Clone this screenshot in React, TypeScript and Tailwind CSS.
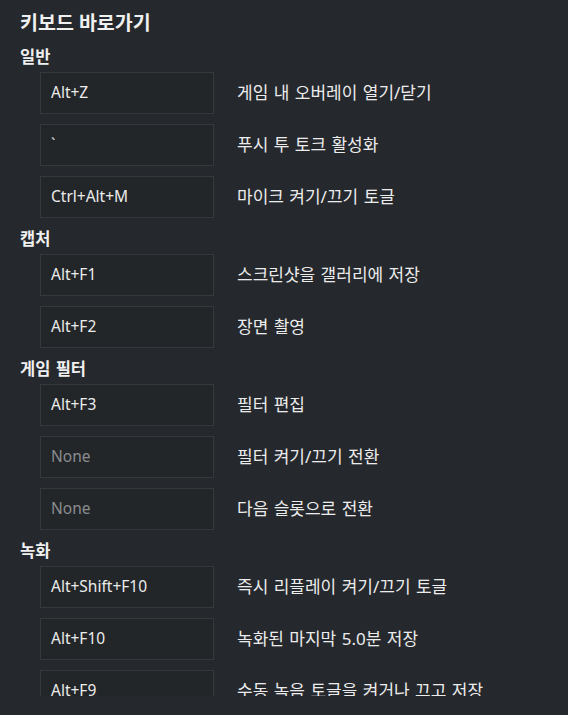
import React from "react";

type Row = { key: string; label: string; none?: boolean };
type Section = { title: string; rows: Row[] };

const sections: Section[] = [
  {
    title: "일반",
    rows: [
      { key: "Alt+Z", label: "게임 내 오버레이 열기/닫기" },
      { key: "`", label: "푸시 투 토크 활성화" },
      { key: "Ctrl+Alt+M", label: "마이크 켜기/끄기 토글" },
    ],
  },
  {
    title: "캡처",
    rows: [
      { key: "Alt+F1", label: "스크린샷을 갤러리에 저장" },
      { key: "Alt+F2", label: "장면 촬영" },
    ],
  },
  {
    title: "게임 필터",
    rows: [
      { key: "Alt+F3", label: "필터 편집" },
      { key: "None", label: "필터 켜기/끄기 전환", none: true },
      { key: "None", label: "다음 슬롯으로 전환", none: true },
    ],
  },
  {
    title: "녹화",
    rows: [
      { key: "Alt+Shift+F10", label: "즉시 리플레이 켜기/끄기 토글" },
      { key: "Alt+F10", label: "녹화된 마지막 5.0분 저장" },
      { key: "Alt+F9", label: "수동 녹음 토글을 켜거나 끄고 저장" },
    ],
  },
];

const font = {
  fontFamily: '"Noto Sans", "Noto Sans CJK KR", sans-serif',
};

export default function App() {
  return (
    <div className="w-[568px] h-[715px] bg-[#25282c]" style={font}>
      <div className="h-[696px] overflow-hidden px-[20px] pt-[10px]">
        <div className="h-[36px] text-[19.5px] leading-[26px] font-bold text-[#f0f0f0]">
          키보드 바로가기
        </div>
        {sections.map((s) => (
          <div key={s.title}>
            <div className="h-[26px] pt-[1px] text-[16.5px] leading-[20px] font-bold text-[#f0f0f0] [word-spacing:1px]">
              {s.title}
            </div>
            {s.rows.map((r, i) => (
              <div key={i} className="flex items-center mb-[10px] pl-[20px]">
                <div
                  className={`w-[174px] h-[42px] shrink-0 flex items-center pl-[10px] border border-[#35383d] bg-[#232629] text-[15.5px] ${
                    r.none ? "text-[#8a8c8f]" : "text-[#ececec]"
                  }`}
                >
                  {r.key}
                </div>
                <div className="ml-[23px] text-[17px] text-[#ececec] whitespace-nowrap [word-spacing:1px]">
                  {r.label}
                </div>
              </div>
            ))}
          </div>
        ))}
      </div>
    </div>
  );
}
